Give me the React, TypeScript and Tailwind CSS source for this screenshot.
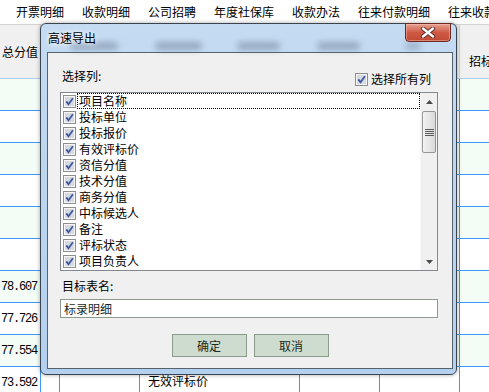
import React from 'react'

const tabs = ['开票明细', '收款明细', '公司招聘', '年度社保库', '收款办法', '往来付款明细', '往来收款明细']

const columns = [
  '项目名称',
  '投标单位',
  '投标报价',
  '有效评标价',
  '资信分值',
  '技术分值',
  '商务分值',
  '中标候选人',
  '备注',
  '评标状态',
  '项目负责人',
]

// background grid rows (only the tail ones show outside the dialog)
const rows = [
  { total: '', note: '' },
  { total: '', note: '' },
  { total: '', note: '' },
  { total: '', note: '' },
  { total: '', note: '' },
  { total: '', note: '' },
  { total: '78.607', note: '' },
  { total: '77.726', note: '' },
  { total: '77.554', note: '' },
  { total: '73.592', note: '无效评标价' },
]

function Check() {
  return (
    <svg width="13" height="13" viewBox="0 0 13 13" className="shrink-0">
      <rect x="0.5" y="0.5" width="12" height="12" fill="#f6f6f6" stroke="#8e8f8f" />
      <rect x="2" y="2" width="9" height="9" fill="#d6dade" />
      <path d="M3.3 6.4 L5.5 9.2 L9.9 3.2" fill="none" stroke="#3d58a3" strokeWidth="1.8" />
    </svg>
  )
}

function Arrow({ down }: { down?: boolean }) {
  return (
    <svg width="7" height="4" viewBox="0 0 7 4">
      <path d={down ? 'M0 0 L7 0 L3.5 4 Z' : 'M0 4 L7 4 L3.5 0 Z'} fill="#4b4b4b" />
    </svg>
  )
}

function Scrollbar() {
  return (
    <div className="w-[17px] flex flex-col bg-[#f0f0f0] border-l border-[#f7f7f7]">
      <div className="h-[17px] flex items-center justify-center">
        <Arrow />
      </div>
      <div className="mt-[1px] mx-[1px] h-[42px] rounded-[2px] border border-[#979797] bg-linear-to-r from-[#f3f3f3] to-[#d9d9d9] flex flex-col items-center justify-center gap-[1px]">
        <div className="w-[9px] h-[1px] bg-[#5a5a5a]" />
        <div className="w-[9px] h-[1px] bg-[#5a5a5a]" />
        <div className="w-[9px] h-[1px] bg-[#5a5a5a]" />
        <div className="w-[9px] h-[1px] bg-[#5a5a5a]" />
      </div>
      <div className="flex-1" />
      <div className="h-[17px] flex items-center justify-center">
        <Arrow down />
      </div>
    </div>
  )
}

function ExportDialog() {
  return (
    <div className="absolute left-[40px] top-[23px] w-[417px] h-[352px] rounded-[6px] border border-[#3a4450] bg-linear-to-b from-[#c4dbf2] to-[#b3d0ee] shadow-[0_0_4px_rgba(0,0,0,0.35)] flex flex-col pl-[6px] pr-[3px] pb-[5px]">
      <div className="relative h-[28px] flex items-start">
        <div className="absolute left-[23px] top-[18px] w-[48px] h-[8px] rounded-full bg-[#5d6e82] opacity-45 blur-[3px]" />
        <div className="absolute left-[108px] top-[18px] w-[47px] h-[8px] rounded-full bg-[#5d6e82] opacity-45 blur-[3px]" />
        <div className="absolute left-[190px] top-[18px] w-[43px] h-[8px] rounded-full bg-[#5d6e82] opacity-45 blur-[3px]" />
        <div className="absolute left-[270px] top-[18px] w-[43px] h-[8px] rounded-full bg-[#5d6e82] opacity-45 blur-[3px]" />
        <div className="absolute left-[358px] top-[18px] w-[16px] h-[8px] rounded-full bg-[#5d6e82] opacity-35 blur-[3px]" />
        <span className="relative ml-[1px] mt-[7px] text-[12px] leading-[14px] text-black [text-shadow:0_0_5px_#fff,0_0_8px_#fff]">
          高速导出
        </span>
        <div className="relative ml-auto mr-[2px] w-[46px] h-[19px] -mt-[1px] rounded-b-[4px] border border-[#6a2b22] bg-linear-to-b from-[#e6a194] via-[#cf5a44] to-[#c24a33] flex items-center justify-center shadow-[inset_0_0_0_1px_rgba(255,200,190,0.45)]">
          <svg width="16" height="11" viewBox="0 0 16 11">
            <path d="M3 1.5 L13 9.5 M13 1.5 L3 9.5" stroke="#5a2a24" strokeWidth="4.2" strokeLinecap="round" />
            <path d="M3 1.5 L13 9.5 M13 1.5 L3 9.5" stroke="#ffffff" strokeWidth="2.4" strokeLinecap="round" />
          </svg>
        </div>
      </div>

      <div className="flex-1 border border-[#56626e] bg-[#f0f0f0] flex flex-col pt-[15px] text-[12px] text-black">
        <div className="ml-[12px] w-[378px] h-[16px] flex items-start justify-between">
          <span className="ml-[2px] leading-[16px]">选择列:</span>
          <div className="mt-[4px] mr-[7px] flex items-center gap-[3px]">
            <Check />
            <span className="leading-[14px]">选择所有列</span>
          </div>
        </div>

        <div className="ml-[12px] mt-[8px] w-[378px] h-[179px] border border-[#828790] bg-white flex">
          <div className="flex-1 flex flex-col">
            {columns.map((c, i) => (
              <div key={c} className="h-[16px] flex items-center pl-[2px]">
                <Check />
                <span
                  className={`ml-[1px] flex-1 h-[16px] pl-[1px] leading-[14px] border ${
                    i === 0 ? 'border-dotted border-black' : 'border-transparent'
                  }`}
                >
                  {c}
                </span>
              </div>
            ))}
          </div>
          <Scrollbar />
        </div>

        <span className="ml-[14px] mt-[7px] leading-[16px]">目标表名:</span>
        <div className="ml-[12px] mt-[5px] w-[378px] h-[19px] border border-[#8c9c8c] bg-white flex items-center pl-[3px] text-[#1c2a1c]">
          标录明细
        </div>

        <div className="mt-[16px] flex justify-center gap-[7px]">
          <button className="w-[75px] h-[23px] border border-[#8c9c8c] bg-[#cedccf] text-[#1a2a1a] leading-[21px]">
            确定
          </button>
          <button className="w-[75px] h-[23px] border border-[#8c9c8c] bg-[#cedccf] text-[#1a2a1a] leading-[21px]">
            取消
          </button>
        </div>
      </div>
    </div>
  )
}

export default function App() {
  return (
    <div className="relative w-[489px] h-[392px] overflow-hidden bg-white text-black font-['Noto_Sans_CJK_SC',sans-serif] text-[12px]">
      <div className="h-[24px] flex items-center pl-[7px] whitespace-nowrap">
        {tabs.map((t) => (
          <span key={t} className="px-[9px] leading-[14px]">
            {t}
          </span>
        ))}
      </div>

      <div className="h-[55px] grid grid-cols-[41px_19px_80px_160px_80px_80px_1fr] bg-[#f0f0f0] border-t border-b border-t-[#d4d4d4] border-b-[#a9cff5]">
        <div className="flex items-center pl-[2px] border-r border-[#d6d6d6]">总分值</div>
        <div className="border-r border-[#d6d6d6]" />
        <div className="border-r border-[#d6d6d6]" />
        <div className="border-r border-[#d6d6d6]" />
        <div className="border-r border-[#d6d6d6]" />
        <div className="border-r border-[#d6d6d6]" />
        <div className="flex items-center pl-[9px] pt-[19px] whitespace-nowrap">招标控制价</div>
      </div>

      {rows.map((r, i) => (
        <div
          key={i}
          className={`h-[32px] grid grid-cols-[41px_19px_80px_160px_80px_80px_1fr] border-b border-[#3a96f8] ${
            i % 2 === 0 ? 'bg-[#f3fdf6]' : 'bg-white'
          }`}
        >
          <div className="flex items-center justify-end pr-[3px] border-r border-[#3a96f8] font-['Liberation_Mono',monospace] text-[12px] tracking-[-1.2px]">
            {r.total}
          </div>
          <div className="border-r border-[#3a96f8]" />
          <div className="border-r border-[#3a96f8]" />
          <div className="flex items-center pl-[8px] pb-[4px] border-r border-[#3a96f8]">{r.note}</div>
          <div className="border-r border-[#3a96f8]" />
          <div className="border-r border-[#3a96f8]" />
          <div />
        </div>
      ))}

      <ExportDialog />
    </div>
  )
}
